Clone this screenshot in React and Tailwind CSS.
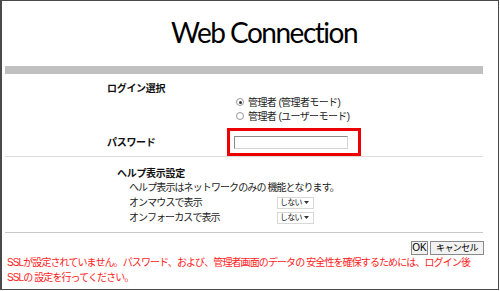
import React from 'react';

const jp = { fontFamily: '"Liberation Sans", "Noto Sans CJK JP", sans-serif' };

const Radio = ({ checked, label }) => (
  <div className="flex items-center h-[14px]">
    <span className="w-[8px] h-[8px] rounded-full border border-[#9a9a9a] bg-white flex items-center justify-center">
      {checked && <span className="w-[3px] h-[3px] rounded-full bg-[#333]" />}
    </span>
    <span className="ml-[4px] text-[10px] tracking-[-0.6px] text-[#222] whitespace-nowrap">{label}</span>
  </div>
);

const FakeSelect = () => (
  <div className="w-[37px] h-[12px] border border-[#d8d8d8] bg-white flex items-center pl-[2px] text-[8px] tracking-[-0.8px] leading-[10px] text-[#222] whitespace-nowrap">
    <span className="flex-1">しない</span>
    <svg width="5" height="3" viewBox="0 0 5 3" className="mr-[4px] shrink-0">
      <path d="M0 0 L5 0 L2.5 3 Z" fill="#333" />
    </svg>
  </div>
);

export default function App() {
  return (
    <div style={jp} className="w-[499px] h-[290px] bg-white border-l-2 border-t border-r border-b border-[#4a4a4a] pl-[3px] overflow-hidden">
      <div className="h-[65px] pl-[166px] pt-[13px]">
        <div style={{ fontFamily: 'Lato, sans-serif' }} className="text-[28px] font-normal tracking-[-1.5px] text-black leading-[36px]">
          Web Connection
        </div>
      </div>
      <div className="w-[478px] h-[8px] bg-[#c0c0c0]" />

      <div className="pl-[102px] pt-[9px]">
        <div className="text-[10px] font-bold tracking-[-0.3px] text-[#111] leading-[12px]">ログイン選択</div>
        <div className="pl-[129px]">
          <Radio checked label="管理者 (管理者モード)" />
          <Radio label="管理者 (ユーザーモード)" />
        </div>
        <div className="flex items-center mt-[5px]">
          <div className="w-[120px] text-[10px] font-bold tracking-[-0.3px] text-[#111]">パスワード</div>
          <div className="w-[134px] h-[28px] border-[3px] border-[#ee0000] flex items-center pl-[4px]">
            <div className="w-[114px] h-[13px] border border-t-[#8a8a8a] border-l-[#8a8a8a] border-r-[#d4d4d4] border-b-[#d4d4d4] bg-white" />
          </div>
        </div>
      </div>
      <div className="w-[478px] h-[1px] bg-[#dcdcdc]" />

      <div className="pl-[112px] pt-[11px]">
        <div className="text-[10px] font-bold tracking-[-0.3px] text-[#111] leading-[12px]">ヘルプ表示設定</div>
        <div className="pl-[12px] text-[10px] tracking-[-0.9px] text-[#222]">
          <div className="h-[15px] flex items-center whitespace-nowrap">ヘルプ表示はネットワークのみの 機能となります。</div>
          <div className="h-[15px] flex items-center">
            <span className="w-[148px] whitespace-nowrap">オンマウスで表示</span>
            <FakeSelect />
          </div>
          <div className="h-[15px] flex items-center">
            <span className="w-[148px] whitespace-nowrap">オンフォーカスで表示</span>
            <FakeSelect />
          </div>
        </div>
      </div>
      <div className="w-[478px] h-[1px] bg-[#c8c8c8] mt-[7px]" />

      <div className="flex justify-end w-[479px] gap-[2px] mt-[8px]">
        <button className="w-[17px] h-[14px] border border-[#8a8a8a] bg-[#f2f2f2] text-[10px] leading-[12px] text-black flex items-center justify-center" style={{ fontFamily: '"Liberation Sans", sans-serif' }}>OK</button>
        <button className="w-[54px] h-[14px] border border-[#8a8a8a] bg-[#f2f2f2] text-[9px] tracking-[-0.6px] leading-[12px] text-black flex items-center justify-center whitespace-nowrap">キャンセル</button>
      </div>

      <div className="pl-[2px] text-[10px] tracking-[-0.9px] leading-[15px] text-[#ff1a1a] whitespace-nowrap">
        <div>SSLが設定されていません。パスワード、および、管理者画面のデータの 安全性を確保するためには、ログイン後</div>
        <div>SSLの 設定を行ってください。</div>
      </div>
    </div>
  );
}
